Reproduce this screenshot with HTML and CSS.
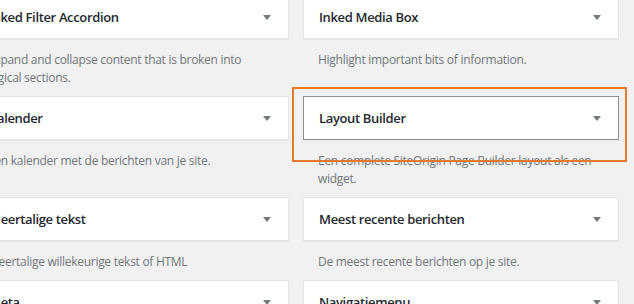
FILE: index.html
```html
<!DOCTYPE html>
<html lang="nl">
<head>
  <meta charset="UTF-8">
  <meta name="viewport" content="width=device-width, initial-scale=1.0">
  <title>Widgets</title>
  <link rel="stylesheet" href="styles.css">
</head>
<body>
  <div class="screen">
    <div class="widget-list">
      <div class="widget">
        <div class="widget-top"><h3>Inked Filter Accordion</h3><span class="arrow"></span></div>
        <p class="widget-desc">Expand and collapse content that is broken into logical sections.</p>
      </div>
      <div class="widget">
        <div class="widget-top"><h3>Inked Media Box</h3><span class="arrow"></span></div>
        <p class="widget-desc">Highlight important bits of information.</p>
      </div>
      <div class="widget">
        <div class="widget-top"><h3>Kalender</h3><span class="arrow"></span></div>
        <p class="widget-desc">Een kalender met de berichten van je site.</p>
      </div>
      <div class="widget">
        <div class="widget-top active"><h3>Layout Builder</h3><span class="arrow"></span></div>
        <p class="widget-desc">Een complete SiteOrigin Page Builder layout als een widget.</p>
      </div>
      <div class="widget">
        <div class="widget-top"><h3>Meertalige tekst</h3><span class="arrow"></span></div>
        <p class="widget-desc">Meertalige willekeurige tekst of HTML</p>
      </div>
      <div class="widget">
        <div class="widget-top"><h3>Meest recente berichten</h3><span class="arrow"></span></div>
        <p class="widget-desc">De meest recente berichten op je site.</p>
      </div>
      <div class="widget">
        <div class="widget-top"><h3>Meta</h3><span class="arrow"></span></div>
        <p class="widget-desc">Inloggen, RSS-feeds en WordPress.org links.</p>
      </div>
      <div class="widget">
        <div class="widget-top"><h3>Navigatiemenu</h3><span class="arrow"></span></div>
        <p class="widget-desc">Een navigatiemenu aan je zijbalk toevoegen.</p>
      </div>
    </div>
    <div class="highlight"></div>
  </div>
</body>
</html>
```

FILE: styles.css
```css
* {
  margin: 0;
  padding: 0;
  box-sizing: border-box;
}
body {
  background: #f1f1f1;
  font-family: 'Open Sans', 'Noto Sans', sans-serif;
  color: #23282d;
}
.screen {
  position: relative;
  width: 634px;
  height: 304px;
  overflow: hidden;
}
.widget-list {
  display: grid;
  grid-template-columns: 316px 316px;
  column-gap: 14px;
  margin: -5px 0 0 -27px;
}
.widget-top {
  height: 44px;
  background: #fff;
  border: 1px solid #e2e4e7;
  box-shadow: 0 1px 1px rgba(0, 0, 0, 0.04);
  display: flex;
  align-items: center;
  justify-content: space-between;
  padding: 0 17px 0 15px;
}
.widget-top.active {
  border-color: #8c8f94;
}
.widget-top h3 {
  font-size: 13px;
  font-weight: 600;
  color: #23282d;
  letter-spacing: -0.35px;
}
.arrow {
  width: 0;
  height: 0;
  border-left: 4px solid transparent;
  border-right: 4px solid transparent;
  border-top: 5px solid #72777c;
}
.widget-desc {
  font-size: 12px;
  line-height: 18px;
  color: #72777c;
  padding: 12px 15px 9px 15px;
  letter-spacing: -0.28px;
}
.highlight {
  position: absolute;
  left: 292px;
  top: 87px;
  width: 335px;
  height: 75px;
  border: 2px solid #e8782a;
}
```
